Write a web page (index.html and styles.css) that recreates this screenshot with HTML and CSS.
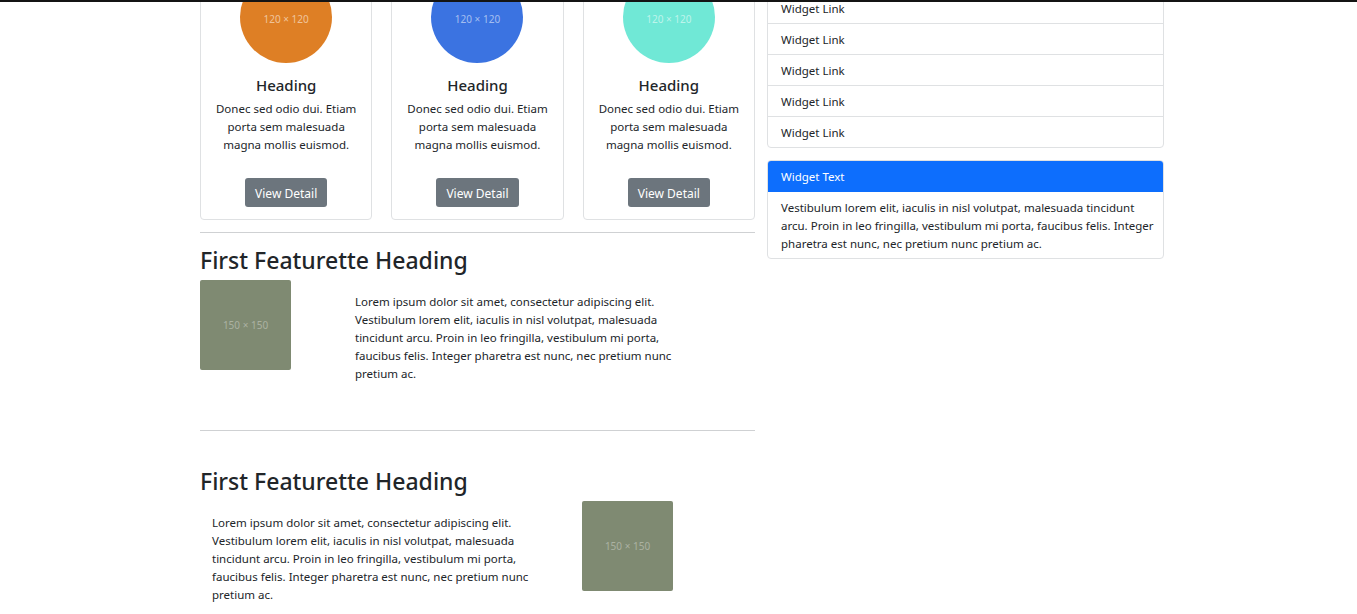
FILE: index.html
```html
<!DOCTYPE html>
<html lang="en">
<head>
<meta charset="utf-8">
<title>Page</title>
<link rel="stylesheet" href="styles.css">
</head>
<body>
<div class="topbar"></div>
<div class="container">
  <main class="main">
    <div class="cards">
      <div class="card">
        <div class="circle orange">120 × 120</div>
        <h3 class="card-title">Heading</h3>
        <p class="card-text">Donec sed odio dui. Etiam porta sem malesuada magna mollis euismod.</p>
        <a class="btn">View Detail</a>
      </div>
      <div class="card">
        <div class="circle blue">120 × 120</div>
        <h3 class="card-title">Heading</h3>
        <p class="card-text">Donec sed odio dui. Etiam porta sem malesuada magna mollis euismod.</p>
        <a class="btn">View Detail</a>
      </div>
      <div class="card">
        <div class="circle teal">120 × 120</div>
        <h3 class="card-title">Heading</h3>
        <p class="card-text">Donec sed odio dui. Etiam porta sem malesuada magna mollis euismod.</p>
        <a class="btn">View Detail</a>
      </div>
    </div>
    <hr class="divider first">
    <section class="feature">
      <h2 class="feature-title">First Featurette Heading</h2>
      <div class="feature-row left-img">
        <div class="ph">150 × 150</div>
        <p class="feature-text">Lorem ipsum dolor sit amet, consectetur adipiscing elit. Vestibulum lorem elit, iaculis in nisl volutpat, malesuada tincidunt arcu. Proin in leo fringilla, vestibulum mi porta, faucibus felis. Integer pharetra est nunc, nec pretium nunc pretium ac.</p>
      </div>
    </section>
    <hr class="divider second">
    <section class="feature second-feature">
      <h2 class="feature-title">First Featurette Heading</h2>
      <div class="feature-row right-img">
        <p class="feature-text">Lorem ipsum dolor sit amet, consectetur adipiscing elit. Vestibulum lorem elit, iaculis in nisl volutpat, malesuada tincidunt arcu. Proin in leo fringilla, vestibulum mi porta, faucibus felis. Integer pharetra est nunc, nec pretium nunc pretium ac.</p>
        <div class="ph">150 × 150</div>
      </div>
    </section>
  </main>
  <aside class="sidebar">
    <ul class="list">
      <li>Widget Link</li>
      <li>Widget Link</li>
      <li>Widget Link</li>
      <li>Widget Link</li>
      <li>Widget Link</li>
      <li>Widget Link</li>
    </ul>
    <div class="widget">
      <div class="widget-head">Widget Text</div>
      <p class="widget-body">Vestibulum lorem elit, iaculis in nisl volutpat, malesuada tincidunt arcu. Proin in leo fringilla, vestibulum mi porta, faucibus felis. Integer pharetra est nunc, nec pretium nunc pretium ac.</p>
    </div>
  </aside>
</div>
</body>
</html>
```
FILE: styles.css
```css
* { box-sizing: border-box; }
html, body { margin: 0; padding: 0; background: #fff; }
body {
  font-family: "Noto Sans", "Open Sans", sans-serif;
  font-size: 11.5px;
  line-height: 18px;
  color: #212529;
  overflow: hidden;
}
.topbar {
  position: fixed;
  top: 0; left: 0; right: 0;
  height: 2px;
  background: #141414;
  z-index: 10;
}
.container {
  display: grid;
  grid-template-columns: 555px 397px;
  column-gap: 12px;
  width: 964px;
  margin-left: 200px;
  margin-top: -42px;
  align-items: start;
}
.cards {
  display: grid;
  grid-template-columns: repeat(3, 1fr);
  column-gap: 19px;
}
.card {
  border: 1px solid #dfe1e3;
  border-radius: 4px;
  padding: 12px 10px 12px;
  display: flex;
  flex-direction: column;
  align-items: center;
  text-align: center;
}
.circle {
  width: 92px; height: 92px;
  border-radius: 50%;
  display: flex;
  align-items: center;
  justify-content: center;
  padding-top: 3px;
  font-size: 10px;
  color: rgba(255,255,255,0.55);
}
.orange { background: #de7f25; }
.blue { background: #3b73e1; }
.teal { background: #70e8d6; }
.card-title {
  margin: 12px 0 0;
  font-size: 15px;
  line-height: 20px;
  font-weight: 500;
}
.card-text { margin: 5px 0 24px; }
.btn {
  display: inline-block;
  background: #6c757d;
  color: #fff;
  border-radius: 3px;
  height: 29px;
  line-height: 31px;
  padding: 0 10px;
  font-size: 12px;
}
.divider {
  border: 0;
  border-top: 1px solid #cfd1d3;
  margin: 12px 0 0;
}
.divider.second { margin-top: 47px; }
.feature-title {
  margin: 12px 0 5px;
  font-size: 23px;
  line-height: 30px;
  font-weight: 500;
}
.second-feature .feature-title { margin-top: 35px; }
.feature-row {
  display: flex;
  align-items: flex-start;
}
.ph {
  width: 91px; height: 90px;
  background: #7f8a72;
  border-radius: 2px;
  display: flex;
  align-items: center;
  justify-content: center;
  font-size: 10px;
  color: rgba(255,255,255,0.35);
  flex: none;
}
.feature-text { margin: 13px 0 0; width: 322px; }
.left-img .feature-text { margin-left: 64px; }
.right-img .feature-text { margin-left: 12px; margin-right: 50px; width: 320px; }
.list {
  list-style: none;
  margin: 3px 0 12px;
  padding: 0;
  border: 1px solid #dfe1e3;
  border-radius: 4px;
}
.list li {
  height: 31px;
  line-height: 30px;
  padding: 1px 13px 0;
  border-top: 1px solid #dfe1e3;
}
.list li:first-child { border-top: 0; height: 30px; }
.widget {
  border: 1px solid #dfe1e3;
  border-radius: 4px;
  overflow: hidden;
}
.widget-head {
  background: #0d6efd;
  color: #fff;
  height: 31px;
  line-height: 31px;
  padding: 0 13px;
}
.widget-body { margin: 0; padding: 7px 6px 5px 13px; }
```
